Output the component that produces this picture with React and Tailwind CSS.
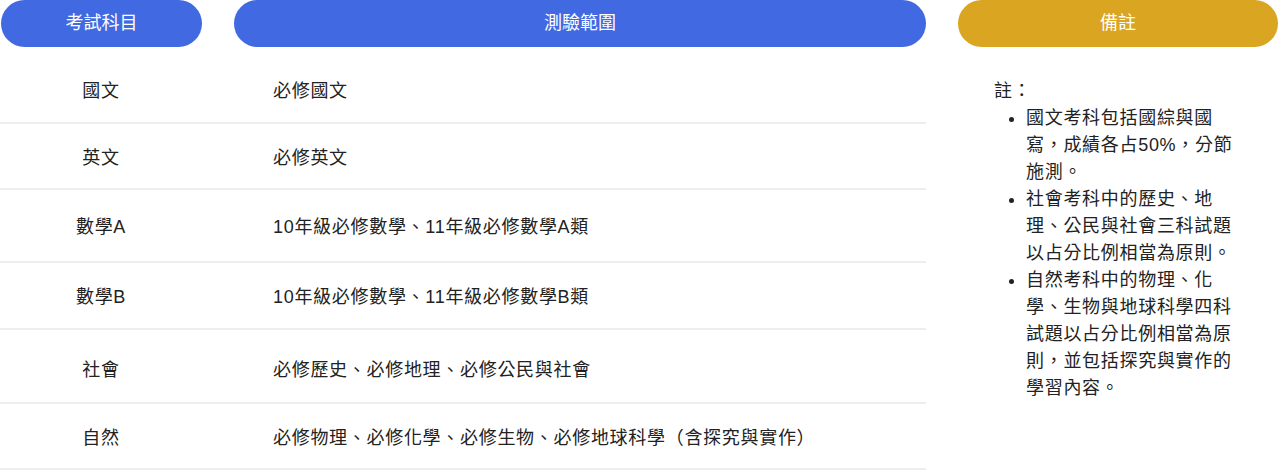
const rows = [
  { subject: '國文', scope: '必修國文', h: 'h-[61px] pt-[4px]' },
  { subject: '英文', scope: '必修英文', h: 'h-[60px] pt-[4px]' },
  { subject: '數學A', scope: '10年級必修數學、11年級必修數學A類', h: 'h-[67px] pt-[4px]' },
  { subject: '數學B', scope: '10年級必修數學、11年級必修數學B類', h: 'h-[61px] pt-[4px]' },
  { subject: '社會', scope: '必修歷史、必修地理、必修公民與社會', h: 'h-[63px] pt-[9px]' },
  { subject: '自然', scope: '必修物理、必修化學、必修生物、必修地球科學（含探究與實作）', h: 'h-[60px] pt-[4px]' },
];

const notes = [
  '國文考科包括國綜與國寫，成績各占50%，分節施測。',
  '社會考科中的歷史、地理、公民與社會三科試題以占分比例相當為原則。',
  '自然考科中的物理、化學、生物與地球科學四科試題以占分比例相當為原則，並包括探究與實作的學習內容。',
];

export default function App() {
  return (
    <div
      lang="zh-Hant"
      className="w-[1278px] h-[471px] bg-white flex gap-8 text-[18px] text-[#222] overflow-hidden"
      style={{ fontFamily: '"Liberation Sans", "Noto Sans CJK TC", sans-serif' }}
    >
      {/* Subject / scope table */}
      <div className="w-[926px] flex flex-col">
        <div className="flex gap-8">
          <div className="w-[201px] ml-px h-[47px] rounded-full bg-[#4169e1] text-white flex items-center justify-center">
            考試科目
          </div>
          <div className="flex-1 h-[47px] rounded-full bg-[#4169e1] text-white flex items-center justify-center">
            測驗範圍
          </div>
        </div>

        <div className="mt-[10px] flex flex-col tracking-[0.7px]">
          {rows.map((r) => (
            <div key={r.subject} className={`flex gap-8 items-center border-b-2 border-[#eeeeee] box-content ${r.h}`}>
              <div className="w-[202px] text-center">{r.subject}</div>
              <div className="flex-1 pl-[39px]">{r.scope}</div>
            </div>
          ))}
        </div>
      </div>

      {/* Notes */}
      <div className="w-[320px] flex flex-col">
        <div className="h-[47px] rounded-full bg-[#daa520] text-white flex items-center justify-center">
          備註
        </div>
        <div className="pt-[31px] pl-[36px] pr-[40px] leading-[27px] tracking-[0.7px]">
          <div>註：</div>
          <ul className="list-disc pl-[32px]">
            {notes.map((n) => (
              <li key={n}>{n}</li>
            ))}
          </ul>
        </div>
      </div>
    </div>
  );
}
